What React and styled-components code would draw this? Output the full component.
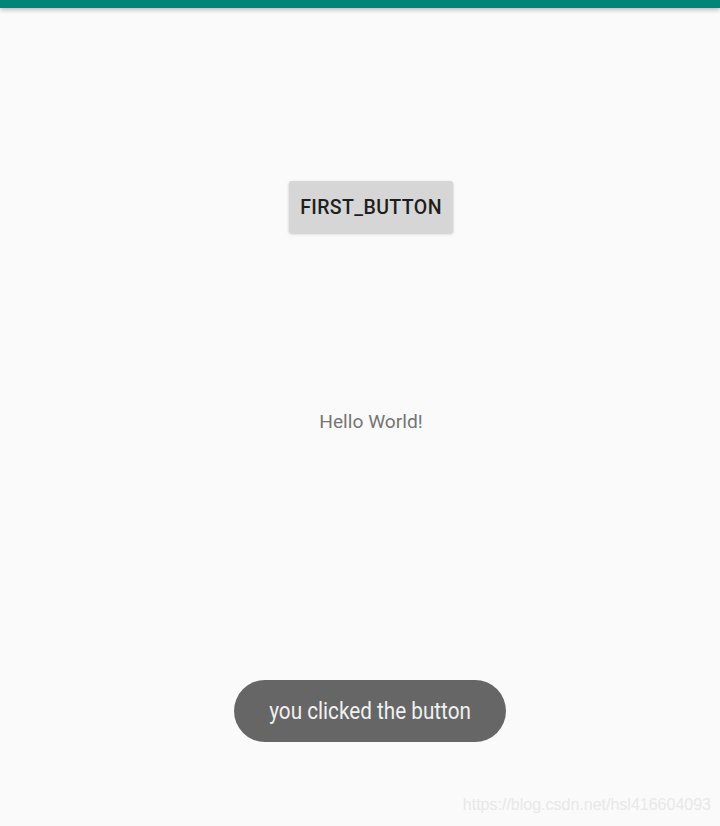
import React from 'react';
import styled, { createGlobalStyle } from 'styled-components';

const GlobalStyle = createGlobalStyle`
  html, body {
    margin: 0;
    padding: 0;
    background: #fafafa;
  }
`;

const Screen = styled.div`
  position: relative;
  width: 720px;
  height: 826px;
  background: #fafafa;
  overflow: hidden;
  display: flex;
  flex-direction: column;
  font-family: Roboto, "Liberation Sans", sans-serif;
`;

const StatusBar = styled.div`
  height: 8px;
  flex-shrink: 0;
  background: #008577;
  box-shadow: 0 2px 4px rgba(0, 0, 0, 0.25);
`;

// the device screen is a bit wider than the crop, so centre sits at ~371px
const Content = styled.div`
  display: flex;
  flex-direction: column;
  align-items: center;
  padding-top: 173px;
  padding-left: 22px;
`;

const RaisedButton = styled.button`
  width: 164px;
  height: 52px;
  border: none;
  border-radius: 3px;
  background: #d6d6d6;
  box-shadow: 0 1px 3px rgba(0, 0, 0, 0.22);
  color: #1e1e1e;
  font-family: Roboto, "Liberation Sans", sans-serif;
  font-weight: 500;
  font-size: 19.5px;
  letter-spacing: 0.4px;
  padding: 0;
`;

const Label = styled.span`
  margin-top: 177px;
  font-size: 19.2px;
  color: #757575;
`;

const Toast = styled.div`
  position: absolute;
  left: 234px;
  top: 680px;
  width: 272px;
  height: 62px;
  border-radius: 31px;
  background: #666666;
  color: #f0f0f0;
  display: flex;
  align-items: center;
  justify-content: center;
  font-size: 23px;
`;

const ToastText = styled.span`
  display: inline-block;
  transform: scaleX(0.9);
`;

const Watermark = styled.div`
  position: absolute;
  right: 9px;
  bottom: 12px;
  font-family: "Liberation Sans", Arial, sans-serif;
  font-size: 16px;
  color: #e8e8e8;
`;

export default function App() {
  return (
    <>
      <GlobalStyle />
      <Screen>
        <StatusBar />
        <Content>
          <RaisedButton>FIRST_BUTTON</RaisedButton>
          <Label>Hello World!</Label>
        </Content>
        <Toast>
          <ToastText>you clicked the button</ToastText>
        </Toast>
        <Watermark>https://blog.csdn.net/hsl416604093</Watermark>
      </Screen>
    </>
  );
}
